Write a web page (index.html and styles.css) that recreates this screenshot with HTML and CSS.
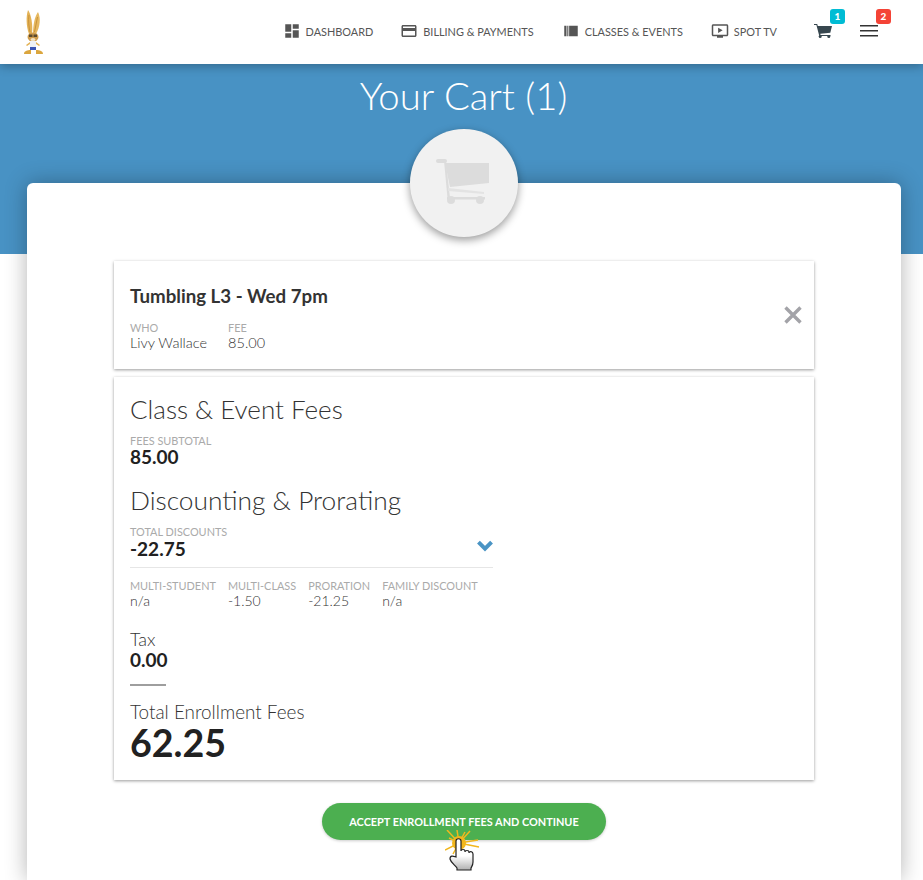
FILE: index.html
```html
<!DOCTYPE html>
<html>

<head>
    <meta charset="utf-8">
    <title>Your Cart</title>
    <link rel="stylesheet" href="styles.css">
</head>

<body>

    <!-- Top nav -->
    <header class="topbar">
        <svg class="logo" viewBox="0 0 22 44" width="22" height="44">
            <path d="M6 24C3 16 3 6 5 0c3 4 5 14 4 24z" fill="#e3b256" />
            <path d="M10 24c0-10 2-18 5-22 3 6 2 15-2 22z" fill="#e6b85f" />
            <path d="M6 5c-1 6 0 12 1 17M14.500 7c-1 5-2 10-3 15" stroke="#c9923a" stroke-width="1" fill="none" />
            <ellipse cx="10" cy="27" rx="5.500" ry="4.500" fill="#cf9d4e" />
            <rect x="6" y="24.500" width="3.500" height="2.500" fill="#5b4a2e" />
            <rect x="10.500" y="24.500" width="3.500" height="2.500" fill="#5b4a2e" />
            <ellipse cx="10" cy="29.500" rx="2.500" ry="1.500" fill="#f3e3c4" />
            <path d="M7 31h6v6H7z" fill="#eef1f6" />
            <path d="M7 37h6v3H7z" fill="#3a55b5" />
            <path d="M7 32l-4 3 1 1 3-2zM13 32l4 3-1 1-3-2z" fill="#e3b256" />
            <path d="M1 44c0-3 3-4 7-4v4zM20 44c0-3-3-4-7-4v4z" fill="#dba63e" />
        </svg>
        <nav class="nav">
            <a class="nav-link first-link">
                <svg class="nav-icon" viewBox="0 0 24 24"><path d="M3 13h8V3H3v10zm0 8h8v-6H3v6zm10 0h8V11h-8v10zm0-18v6h8V3h-8z" /></svg>
                DASHBOARD
            </a>
            <a class="nav-link">
                <svg class="nav-icon" viewBox="0 0 24 24"><path d="M20 4H4c-1.110 0-2 .89-2 2v12c0 1.110.89 2 2 2h16c1.110 0 2-.89 2-2V6c0-1.110-.89-2-2-2zm0 14H4v-6h16v6zm0-10H4V6h16v2z" /></svg>
                BILLING &amp; PAYMENTS
            </a>
            <a class="nav-link">
                <svg class="nav-icon" viewBox="0 0 24 24"><path d="M3 5h3v14H3zM7 5h1.500v14H7zM9.500 5H21v14H9.500z" /></svg>
                CLASSES &amp; EVENTS
            </a>
            <a class="nav-link last-link">
                <svg class="nav-icon" viewBox="0 0 24 24"><path d="M21 3H3c-1.100 0-2 .9-2 2v12c0 1.100.9 2 2 2h5v2h8v-2h5c1.100 0 2-.9 2-2V5c0-1.100-.9-2-2-2zm0 14H3V5h18v12zM9.500 7.500v7l6-3.500z" /></svg>
                SPOT TV
            </a>
            <a class="nav-btn cart-btn">
                <svg class="btn-icon" viewBox="0 0 18 14"><path d="M0 0h3.200l.6 2H18l-1.700 6.800-10 1 .3 1.200h9.900v1H5.300L2.400 1H0z" /><circle cx="6.200" cy="12.500" r="1.500" /><circle cx="14.800" cy="12.500" r="1.500" /></svg>
                <span class="badge badge-cyan">1</span>
            </a>
            <a class="nav-btn menu-btn">
                <svg class="btn-icon" viewBox="0 0 18 12"><path d="M0 0h18v1.600H0zM0 5h18v1.600H0zM0 10h18v1.600H0z" /></svg>
                <span class="badge badge-red">2</span>
            </a>
        </nav>
    </header>

    <!-- Blue band with title -->
    <section class="hero">
        <h1 class="hero-title">Your Cart (1)</h1>
    </section>

    <main class="sheet">
        <div class="hero-circle">
            <svg viewBox="0 0 56 48" width="56" height="48">
                <rect x="0" y="0" width="11" height="4" rx="2" fill="#dcdcdc" />
                <path d="M9 4h44v20l-39 4z" fill="#dcdcdc" />
                <path d="M8 2l2 1 4 36h-2.500z" fill="#dcdcdc" />
                <path d="M12 29l36 4v2l-36-3z" fill="#e3e3e3" />
                <rect x="11" y="38" width="38" height="2.500" fill="#dcdcdc" />
                <circle cx="15" cy="41" r="4" fill="#dcdcdc" />
                <circle cx="44" cy="41" r="4" fill="#dcdcdc" />
            </svg>
        </div>

        <!-- Cart item -->
        <div class="card item-card">
            <h2 class="item-name">Tumbling L3 - Wed 7pm</h2>
            <div class="fields item-fields">
                <div>
                    <div class="label">WHO</div>
                    <div class="value-light">Livy Wallace</div>
                </div>
                <div>
                    <div class="label">FEE</div>
                    <div class="value-light">85.00</div>
                </div>
            </div>
            <svg class="remove" viewBox="0 0 20 20" width="20" height="20">
                <path d="M2.500 2.500l15 15M17.500 2.500l-15 15" stroke="#a3a3a8" stroke-width="3.400" fill="none" />
            </svg>
        </div>

        <!-- Fees summary -->
        <div class="card fees-card">
            <h3 class="section-title">Class &amp; Event Fees</h3>
            <div class="label fees-label">FEES SUBTOTAL</div>
            <div class="amount subtotal">85.00</div>

            <h3 class="section-title discount-title">Discounting &amp; Prorating</h3>
            <div class="discount-total">
                <div class="label fees-label">TOTAL DISCOUNTS</div>
                <div class="amount">-22.75</div>
                <svg class="chevron" viewBox="0 0 16 11" width="18" height="12">
                    <path d="M2 2l6 6 6-6" stroke="#4a94c4" stroke-width="3.600" fill="none" />
                </svg>
            </div>
            <div class="fields discount-fields">
                <div>
                    <div class="label">MULTI-STUDENT</div>
                    <div class="value-small">n/a</div>
                </div>
                <div>
                    <div class="label">MULTI-CLASS</div>
                    <div class="value-small">-1.50</div>
                </div>
                <div>
                    <div class="label">PRORATION</div>
                    <div class="value-small">-21.25</div>
                </div>
                <div>
                    <div class="label">FAMILY DISCOUNT</div>
                    <div class="value-small">n/a</div>
                </div>
            </div>

            <div class="tax-label">Tax</div>
            <div class="amount">0.00</div>
            <div class="divider"></div>
            <div class="total-label">Total Enrollment Fees</div>
            <div class="total">62.25</div>
        </div>

        <div class="actions">
            <a class="accept-btn">ACCEPT ENROLLMENT FEES AND CONTINUE</a>
            <svg class="pointer" viewBox="0 0 36 42" width="36" height="42">
                <defs>
                    <linearGradient id="handFill" x1="0" y1="0" x2="0" y2="1">
                        <stop offset="0.550" stop-color="#ffffff" />
                        <stop offset="1" stop-color="#b0b0b0" />
                    </linearGradient>
                </defs>
                <g stroke="#f2b71d" stroke-width="1.500">
                    <path d="M14 13L2 0M14 13L12 0M14 13L25 1M14 13L33 10M14 13L34 17M14 13L0 20M14 13L4 8M14 13L8 24M14 13L20 2" />
                </g>
                <circle cx="14" cy="13" r="7" fill="#f2b71d" />
                <path d="M11 27V11c0-3 5-3 5 0v10c0-2 4-2 4 0v1c0-2 4-2 4 0v1c0-2 4-2 4 1v8c0 3-1 4-2 6v2H12v-2c-2-3-6-5-7-9 0-4 3-3 6-2z" fill="url(#handFill)" stroke="#222222" stroke-width="1.200" />
            </svg>
        </div>
    </main>

</body>

</html>
```

FILE: styles.css
```css
* {
    box-sizing: border-box;
}

html,
body {
    margin: 0;
    height: 880px;
    overflow: hidden;
}

body {
    background-color: #ffffff;
    font-family: "Lato", "Liberation Sans", sans-serif;
    color: #212121;
}

h1,
h2,
h3 {
    margin: 0;
    font-weight: 400;
}

/* Top nav */
.topbar {
    height: 64px;
    background-color: #ffffff;
    display: flex;
    align-items: center;
    justify-content: space-between;
    padding: 0 42px 2px 23px;
    position: relative;
    z-index: 2;
    box-shadow: 0 2px 10px rgba(0, 0, 0, 0.3);
}

.logo {
    margin-top: 1px;
}

.nav {
    display: flex;
    align-items: center;
}

.nav-link {
    display: flex;
    align-items: center;
    gap: 5px;
    font-size: 10.9px;
    color: #555555;
    margin-right: 28px;
    white-space: nowrap;
}

.first-link {
    margin-right: 27px;
}

.last-link {
    margin-right: 0;
}

.nav-icon {
    width: 18px;
    height: 18px;
    fill: #555555;
}

.nav-btn {
    position: relative;
    display: flex;
    align-items: center;
    justify-content: center;
    width: 24px;
    height: 24px;
}

.cart-btn {
    margin: 0 22px 0 34px;
}

.btn-icon {
    width: 18px;
    height: 14px;
    fill: #37474f;
}

.menu-btn .btn-icon {
    height: 12px;
    fill: #333333;
}

.badge {
    position: absolute;
    top: -10px;
    left: 19px;
    width: 15px;
    height: 15px;
    border-radius: 3px;
    color: #ffffff;
    font-size: 10px;
    font-weight: 900;
    line-height: 15px;
    text-align: center;
}

.badge-cyan {
    background-color: #00bcd4;
}

.badge-red {
    background-color: #f44336;
}

/* Blue band */
.hero {
    height: 190px;
    background-color: #4892c4;
    text-align: center;
}

.hero-title {
    font-size: 38.3px;
    font-weight: 300;
    line-height: 46px;
    padding: 8px 0 0 4px;
    color: #ffffff;
}

.sheet {
    position: relative;
    width: 874px;
    height: 697px;
    margin: -71px 0 0 27px;
    background-color: #ffffff;
    border-radius: 6px 6px 0 0;
    box-shadow: 0 0 22px rgba(0, 0, 0, 0.3);
    padding-top: 78px;
}

.hero-circle {
    position: absolute;
    top: -54px;
    left: 383px;
    width: 108px;
    height: 108px;
    border-radius: 50%;
    background-color: #f1f1f1;
    box-shadow: 0 3px 8px rgba(0, 0, 0, 0.4);
    display: flex;
    align-items: center;
    justify-content: center;
}

/* Cards */
.card {
    width: 700px;
    margin: 0 auto 8px;
    background-color: #ffffff;
    box-shadow: 0 1px 3px rgba(0, 0, 0, 0.4);
    padding-left: 16px;
    position: relative;
}

.item-card {
    height: 108px;
    padding-top: 23px;
}

.item-name {
    font-size: 18.7px;
    font-weight: 700;
    line-height: 24px;
    color: #333333;
}

.fields {
    display: flex;
}

.item-fields {
    margin-top: 14px;
    gap: 21px;
}

.label {
    font-size: 10.9px;
    line-height: 12px;
    color: #aaaaaa;
}

.value-light {
    font-size: 14.5px;
    font-weight: 300;
    line-height: 17px;
    color: #333333;
}

.remove {
    position: absolute;
    top: 44px;
    right: 11px;
}

.fees-card {
    height: 403px;
    padding-top: 17px;
}

.section-title {
    font-size: 26px;
    font-weight: 300;
    line-height: 30px;
    color: #333333;
}

.fees-label {
    margin-top: 11px;
}

.amount {
    font-size: 19px;
    font-weight: 700;
    line-height: 22px;
    color: #212121;
}

.subtotal {
    margin-top: -1px;
}

.discount-title {
    font-size: 26.3px;
    margin-top: 17px;
}

.discount-total {
    position: relative;
    width: 363px;
    padding-bottom: 7px;
    border-bottom: 1px solid #e6e6e6;
}

.chevron {
    position: absolute;
    top: 14px;
    right: -1px;
}

.discount-fields {
    margin-top: 12px;
    gap: 12px;
}

.value-small {
    font-size: 14px;
    font-weight: 300;
    line-height: 17px;
    color: #333333;
}

.tax-label {
    margin-top: 20px;
    font-size: 18px;
    font-weight: 300;
    line-height: 20px;
    color: #333333;
}

.divider {
    width: 36px;
    height: 2px;
    margin-top: 13px;
    background-color: #9e9e9e;
}

.total-label {
    margin-top: 15px;
    font-size: 18.9px;
    font-weight: 300;
    line-height: 22px;
    color: #333333;
}

.total {
    font-size: 37.6px;
    font-weight: 700;
    line-height: 40px;
    color: #212121;
}

/* Button */
.actions {
    position: relative;
    display: flex;
    justify-content: center;
    margin-top: 23px;
}

.accept-btn {
    display: block;
    width: 284px;
    height: 37px;
    border-radius: 19px;
    background-color: #4caf50;
    box-shadow: 0 1px 3px rgba(0, 0, 0, 0.2);
    color: #ffffff;
    font-size: 10.9px;
    font-weight: 700;
    line-height: 37px;
    text-align: center;
}

.pointer {
    position: absolute;
    top: 27px;
    left: 418px;
}
```
